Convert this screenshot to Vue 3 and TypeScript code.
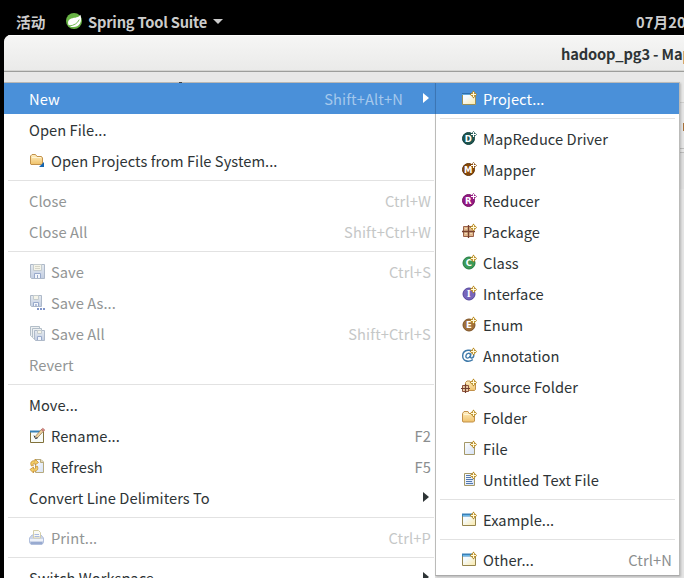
<script setup lang="ts">
interface Disc {
  letter: string
  fill: string
  edge: string
  family?: string
  hadoop?: boolean
}

interface Item {
  label?: string
  icon?: string
  disc?: Disc
  keys?: string
  disabled?: boolean
  active?: boolean
  arrow?: boolean
  separator?: boolean
}

const separator: Item = { separator: true }

const fileMenu: Item[] = [
  { label: 'New', keys: 'Shift+Alt+N', arrow: true, active: true },
  { label: 'Open File...' },
  { label: 'Open Projects from File System...', icon: 'open' },
  separator,
  { label: 'Close', keys: 'Ctrl+W', disabled: true },
  { label: 'Close All', keys: 'Shift+Ctrl+W', disabled: true },
  separator,
  { label: 'Save', keys: 'Ctrl+S', icon: 'save', disabled: true },
  { label: 'Save As...', icon: 'saveas', disabled: true },
  { label: 'Save All', keys: 'Shift+Ctrl+S', icon: 'saveall', disabled: true },
  { label: 'Revert', disabled: true },
  separator,
  { label: 'Move...' },
  { label: 'Rename...', keys: 'F2', icon: 'rename' },
  { label: 'Refresh', keys: 'F5', icon: 'refresh' },
  { label: 'Convert Line Delimiters To', arrow: true },
  separator,
  { label: 'Print...', keys: 'Ctrl+P', icon: 'print', disabled: true },
  separator,
  { label: 'Switch Workspace', arrow: true },
]

const newMenu: Item[] = [
  { label: 'Project...', icon: 'project', active: true },
  separator,
  { label: 'MapReduce Driver', disc: { letter: 'D', fill: '#1d5650', edge: '#123f3c', hadoop: true } },
  { label: 'Mapper', disc: { letter: 'M', fill: '#8a4a08', edge: '#5f3206', hadoop: true } },
  { label: 'Reducer', disc: { letter: 'R', fill: '#941982', edge: '#741065', hadoop: true } },
  { label: 'Package', icon: 'package' },
  { label: 'Class', disc: { letter: 'C', fill: '#3c9a58', edge: '#1f7a3e' } },
  { label: 'Interface', disc: { letter: 'I', fill: '#7766bb', edge: '#51429a', family: 'DejaVu Serif, serif' } },
  { label: 'Enum', disc: { letter: 'E', fill: '#a0703c', edge: '#7d5224' } },
  { label: 'Annotation', icon: 'annotation' },
  { label: 'Source Folder', icon: 'source' },
  { label: 'Folder', icon: 'folder' },
  { label: 'File', icon: 'file' },
  { label: 'Untitled Text File', icon: 'text' },
  separator,
  { label: 'Example...', icon: 'wizard' },
  separator,
  { label: 'Other...', icon: 'wizard', keys: 'Ctrl+N' },
]

const menus = [
  { name: 'file', items: fileMenu },
  { name: 'new', items: newMenu },
]
</script>

<template>
  <svg class="defs" width="0" height="0" aria-hidden="true">
    <defs>
      <linearGradient id="gold" x1="0" y1="0" x2="0" y2="1">
        <stop offset="0" stop-color="#fff0c4" /><stop offset="1" stop-color="#efc169" />
      </linearGradient>
      <linearGradient id="paper" x1="0" y1="0" x2="1" y2="1">
        <stop offset="0" stop-color="#fdfeff" /><stop offset="1" stop-color="#d5e1f5" />
      </linearGradient>
      <linearGradient id="pane" x1="0" y1="0" x2="1" y2="1">
        <stop offset="0.3" stop-color="#f5fbff" /><stop offset="1" stop-color="#fbe9a8" />
      </linearGradient>
      <linearGradient id="steel" x1="0" y1="0" x2="0" y2="1">
        <stop offset="0" stop-color="#e6ebf0" /><stop offset="1" stop-color="#c3cee2" />
      </linearGradient>
    </defs>
    <symbol id="spark" viewBox="0 0 16 16">
      <path d="M12.5 .6 14.2 2.8 16 4.5 14.2 6.2 12.5 8.4 10.8 6.2 8.6 4.5 10.8 2.8Z" fill="#b98a22" />
      <path d="M12.5 2V7M10 4.5H15" stroke="#fff9dc" stroke-width="1.2" />
    </symbol>
    <symbol id="project" viewBox="0 0 16 16">
      <path d="M1.5 4.5H14.5V14.5H1.5Z" fill="url(#pane)" stroke="#9a9058" />
      <path d="M1 3.5H12" stroke="#2e6fae" />
      <path d="M1 4.5H12" stroke="#61a9dd" />
      <use href="#spark" />
    </symbol>
    <symbol id="wizard" viewBox="0 0 16 16">
      <path d="M1.5 4.5H14.5V14.5H1.5Z" fill="url(#pane)" stroke="#96854d" />
      <path d="M1 4H12" stroke="#3980b9" stroke-width="3" />
      <path d="M2 4.5H11" stroke="#69b8e6" />
      <use href="#spark" />
    </symbol>
    <symbol id="package" viewBox="0 0 16 16">
      <path d="M2.5 3.5H12.5V13.5H2.5Z" fill="#deb68b" stroke="#9a6049" />
      <path d="M1 8.5H14M7.5 2V15" stroke="#76402f" stroke-width="1.3" />
      <path d="M4 5.5H6M9 5.5H11M4 10.5H6M9 10.5H11" stroke="#f2d9b7" />
      <use href="#spark" />
    </symbol>
    <symbol id="annotation" viewBox="0 0 16 16">
      <path d="M11.8 12.6C6.7 16 1.5 13.6 1.7 8.6 1.9 2.1 11.8 1.4 12.7 7 13.4 11.6 9.4 11.6 9.4 9.8L10 6.1M9.5 7.8C9 5.4 5.2 5.9 4.9 9 4.7 12 8.2 11.7 9.2 8.7" fill="none" stroke="#3e79a9" stroke-width="1.4" />
      <use href="#spark" />
    </symbol>
    <symbol id="folder" viewBox="0 0 16 16">
      <path d="M1.5 12V4.5L3 2.5H7L8 4.5H13.5V12L12.5 13H2Z" fill="url(#gold)" stroke="#c2914a" />
      <path d="M3 5.5H12" stroke="#fff5d5" />
      <use href="#spark" />
    </symbol>
    <symbol id="source" viewBox="0 0 16 16">
      <path d="M4.5 12.5V4.5L6 3H9L10 4.5H14.5V11.5L13.5 12.5Z" fill="url(#gold)" stroke="#c2914a" />
      <path d="M1.5 7.5H7.5V13.5H1.5Z" fill="#edcda8" stroke="#8d523c" />
      <path d="M0 10.5H9M4.5 6V15" stroke="#72402f" stroke-width="1.2" />
      <use href="#spark" />
    </symbol>
    <symbol id="file" viewBox="0 0 16 16">
      <path d="M3.5 2.5H13.5V14.5H3.5Z" fill="url(#paper)" stroke="#a49868" />
      <use href="#spark" />
    </symbol>
    <symbol id="text" viewBox="0 0 16 16">
      <path d="M3.5 2.5H13.5V14.5H3.5Z" fill="url(#paper)" stroke="#a49868" />
      <path d="M5 4.5H9M5 6.5H10M5 8.5H12M5 10.5H11M5 12.5H12" stroke="#5279b0" />
      <use href="#spark" />
    </symbol>
    <symbol id="open" viewBox="0 0 16 16">
      <path d="M1.5 12V4L3 2.5H6.5L8 4.5H12.5L13.5 6V12L12.5 12.5H2Z" fill="url(#gold)" stroke="#c2914a" />
      <path d="M3 5.5H12" stroke="#fff5d5" />
      <path d="M15 10V15H10Z" fill="#1565af" />
    </symbol>
    <symbol id="save" viewBox="0 0 16 16">
      <path d="M1.5 1.5H15.5V15.5H2.5L1.5 14.5Z" fill="url(#steel)" stroke="#aeb9c9" />
      <path d="M4.5 1.5H12.5V7.5H4.5Z" fill="#f5f4e9" stroke="#c5ccce" />
      <path d="M6 3.5H11M6 5.5H11" stroke="#d5d5c8" />
      <path d="M5.5 15V10.5H11.5V15" fill="#f3f6fb" stroke="#98a9cb" />
      <path d="M8.5 12V15" stroke="#98a9cb" />
    </symbol>
    <symbol id="saveas" viewBox="0 0 16 16">
      <path d="M1.5 1.5H12.5V12.5H2.5L1.5 11.5Z" fill="url(#steel)" stroke="#aeb9c9" />
      <path d="M4.5 1.5H9.5V5.5H4.5Z" fill="#f5f4e9" stroke="#c5ccce" />
      <path d="M4.5 12V8.5H9.5V12" fill="#f3f6fb" stroke="#98a9cb" />
      <path d="M7 10V12.5" stroke="#98a9cb" stroke-width="1.4" />
      <path d="M8 15H10M11 15H13M14 15H16" stroke="#8195c9" stroke-width="2" />
    </symbol>
    <symbol id="saveall" viewBox="0 0 16 16">
      <path d="M1.5 1.5H10.5V11.5H2.5L1.5 10.5Z" fill="#edf0f2" stroke="#b3bec8" />
      <path d="M3.5 3.5H12.5V13.5H4.5L3.5 12.5Z" fill="#edf0f2" stroke="#b3bec8" />
      <path d="M5.5 5.5H15.5V15.5H6.5L5.5 14.5Z" fill="url(#steel)" stroke="#aeb9c9" />
      <path d="M8.5 5.5H12.5V8.5H8.5Z" fill="#f5f4e9" stroke="#c5ccce" />
      <path d="M8.5 15V11.5H12.5V15" fill="#f3f6fb" stroke="#98a9cb" />
    </symbol>
    <symbol id="rename" viewBox="0 0 16 16">
      <path d="M1.5 4.5H14.5V15.5H1.5Z" fill="#f7fbf8" stroke="#81713b" />
      <path d="M1 4.5H11" stroke="#3480b7" stroke-width="2" />
      <path d="M6.3 9.5 8 11.2 14.5 4.2 12.3 2.5Z" fill="#efd49e" stroke="#927c5f" stroke-width=".8" />
      <path d="M12.2 2.7 13.8 1.2 15.8 2.9 14.5 4.4Z" fill="#d78982" stroke="#ae6660" stroke-width=".6" />
      <path d="M5 8.6 6.5 11.6 8.7 10.8" stroke="#292e32" fill="none" />
    </symbol>
    <symbol id="refresh" viewBox="0 0 16 16">
      <path d="M6.5 1.5H12L14.5 4V14.5H6.5Z" fill="url(#paper)" stroke="#b6aa7f" />
      <path d="M11.5 1.5V4.5H14.5" fill="#e6d9ae" stroke="#b6aa7f" />
      <path d="M2.5 8C.5 4.5 3 2 6 3V1L9.5 4.5 6 7V5.2C4.5 4.8 3.5 6 4.5 7.4ZM8.2 8C10 11.5 7.5 14 4.5 13V15L1 11.5 4.5 9V10.8C6.2 11.2 7 10 6.3 8.6Z" fill="#f4ce66" stroke="#c38b32" stroke-width=".8" />
    </symbol>
    <symbol id="print" viewBox="0 0 16 16">
      <path d="M3 6H12L14.5 9V13.5L13 15.5H2L.5 13.5V9Z" fill="#ccd5e8" stroke="#b2c0dd" />
      <path d="M4.5 9V1.5H9.5L11.5 3.5V9Z" fill="#fafaf4" stroke="#d4ceab" />
      <path d="M5.5 5.5H10M5.5 7.5H10.5" stroke="#a8b9df" />
      <path d="M1 11H14" stroke="#eef2fa" stroke-width="2" />
      <path d="M1.5 14H13.5" stroke="#98aad0" stroke-width="2" />
    </symbol>
  </svg>

  <div class="desktop">
    <header class="topbar">
      <span class="activities">活动</span>
      <svg class="leaf" viewBox="0 0 16 16">
        <circle cx="8" cy="8" r="8" fill="#68b345" />
        <path d="M14.3 1.7C12.8 5 9 4.1 5.1 5.6 1.5 7 1.2 11 3.6 13.2 7.3 14.9 12 14.2 14 10.5 15.6 7.7 15.3 4.4 14.3 1.7Z" fill="#fff" />
        <path d="M3 13C8 12.6 11.7 10.2 13.2 6.6" fill="none" stroke="#68b345" stroke-width=".9" />
        <circle cx="3.5" cy="13.1" r=".8" fill="#68b345" />
      </svg>
      <span class="app">Spring Tool Suite</span>
      <i class="caret"></i>
      <span class="clock">07月20</span>
    </header>

    <main class="window">
      <div class="titlebar"><span>hadoop_pg3 - Map</span></div>
      <div class="toolbar"></div>
      <div class="editor"><i class="tab"></i><i class="rule"></i><i class="strip"></i></div>
    </main>

    <i class="sliver"></i>

    <nav v-for="menu in menus" :key="menu.name" class="menu" :class="menu.name">
      <template v-for="(item, i) in menu.items" :key="i">
        <hr v-if="item.separator" />
        <div v-else class="item" :class="{ active: item.active, disabled: item.disabled }">
          <svg v-if="item.icon" class="icon"><use :href="'#' + item.icon" /></svg>
          <svg v-if="item.disc" class="icon" viewBox="0 0 16 16">
            <circle :cx="item.disc.hadoop ? 7.5 : 8" :cy="item.disc.hadoop ? 8.5 : 9" r="6" :fill="item.disc.fill" :stroke="item.disc.edge" />
            <text class="letter" :x="item.disc.hadoop ? 7.2 : 7.8" :y="item.disc.hadoop ? 11.5 : 12" text-anchor="middle" :font-family="item.disc.family ?? 'DejaVu Sans, sans-serif'">{{ item.disc.letter }}</text>
            <template v-if="item.disc.hadoop">
              <path d="M12.5 1 14 3 16 4.5 14 6 12.5 8 11 6 9 4.5 11 3Z" :fill="item.disc.fill" />
              <path d="M12.5 2V7M10 4.5H15" stroke="#fff" stroke-width="1.1" />
            </template>
            <use v-else href="#spark" />
          </svg>
          <span class="label">{{ item.label }}</span>
          <span v-if="item.keys" class="keys">{{ item.keys }}</span>
          <i v-if="item.arrow" class="arrow"></i>
        </div>
      </template>
    </nav>
  </div>
</template>

<style>
body {
  margin: 0;
  overflow: hidden;
}
</style>

<style scoped>
.defs {
  position: absolute;
}
.desktop {
  position: relative;
  width: 684px;
  height: 578px;
  overflow: hidden;
  background: #000;
  color: #2e3436;
  font-family: "Noto Sans CJK SC", sans-serif;
  font-size: 14.667px;
  white-space: nowrap;
}
.topbar {
  display: flex;
  align-items: center;
  box-sizing: border-box;
  height: 35px;
  padding: 8px 0 0 16px;
  color: #ccc;
  font-weight: bold;
  line-height: 27px;
}
.activities {
  width: 50px;
}
.leaf {
  width: 16px;
  height: 16px;
  margin-top: -2px;
}
.app {
  width: 119px;
  margin-left: 6px;
  letter-spacing: -0.2px;
}
.caret {
  margin-left: 6px;
  border: 5px solid transparent;
  border-top-color: #ccc;
  border-bottom: 0;
}
.clock {
  flex: none;
  width: 48px;
  margin-left: auto;
  letter-spacing: 0.1px;
}
.window {
  display: flex;
  flex-direction: column;
  height: 543px;
  margin-left: 4px;
  overflow: hidden;
  border-radius: 7px 0 0;
  background: #e8e8e7;
}
.titlebar {
  flex: none;
  box-sizing: border-box;
  height: 37px;
  padding-left: 557px;
  border-bottom: 1px solid #9d9e9b;
  box-shadow: inset 0 1px #fff, inset 0 -1px #d5d5d2;
  background: linear-gradient(#f6f6f5, #eaeae9);
  font-weight: bold;
  letter-spacing: -0.15px;
  line-height: 38px;
}
.toolbar {
  flex: none;
  height: 30px;
  border-bottom: 1px solid #cfcfcd;
}
.editor {
  display: flex;
  flex-direction: column;
  flex: 1;
  align-items: flex-end;
  background: #e4e4e4;
}
.tab {
  width: 1px;
  height: 8px;
  margin-top: 20px;
  background: #a66f38;
}
.rule {
  width: 10px;
  height: 3px;
  margin-top: 17px;
  border: solid #bcbcbb;
  border-width: 1px 0;
}
.strip {
  width: 10px;
  height: 36px;
  background: #dedede;
}
.sliver {
  position: absolute;
  top: 82px;
  left: 179px;
  z-index: 3;
  width: 3px;
  height: 1px;
  background: #444;
}
.menu {
  position: absolute;
  top: 82px;
  box-sizing: border-box;
  border-top: 1px solid #b9b8b5;
  background: #fff;
}
.file {
  left: 4px;
  width: 431px;
}
.new {
  left: 435px;
  width: 245px;
  height: 494px;
  border: 1px solid #bbbbb9;
  border-bottom-color: #aaa;
  box-shadow: 1px 1px 2px #0003;
}
.item {
  display: flex;
  align-items: center;
  box-sizing: border-box;
  height: 31px;
  padding: 0 4px 0 25px;
  line-height: 31px;
}
.new .item {
  padding-right: 7px;
}
.new .active {
  margin-left: -1px;
  border-left: 1px solid #3b75b4;
}
.icon {
  flex: none;
  width: 16px;
  height: 16px;
  margin: 0 6px 1px 0;
}
.letter {
  fill: #fff;
  font-size: 8.5px;
  font-weight: bold;
}
.label {
  letter-spacing: 0.05px;
}
.keys {
  margin-left: auto;
  color: #8b8e8f;
  letter-spacing: 0.13px;
}
.disabled {
  color: #929595;
}
.disabled .keys {
  color: #c5c7c7;
}
.active {
  background: #4a90d9;
  color: #fff;
}
.active .keys {
  color: #a5c8ec;
}
.arrow {
  margin: 0 2px 1px auto;
  border: 5.5px solid transparent;
  border-width: 5.5px 0 5.5px 6px;
  border-left-color: #2e3436;
}
.keys + .arrow {
  margin-left: 20px;
}
.active .arrow {
  border-left-color: #fff;
}
hr {
  height: 1px;
  margin: 4px 1px 4px 4px;
  border: 0;
  background: #e2e2e2;
}
.new hr {
  margin-right: 4px;
}
</style>
